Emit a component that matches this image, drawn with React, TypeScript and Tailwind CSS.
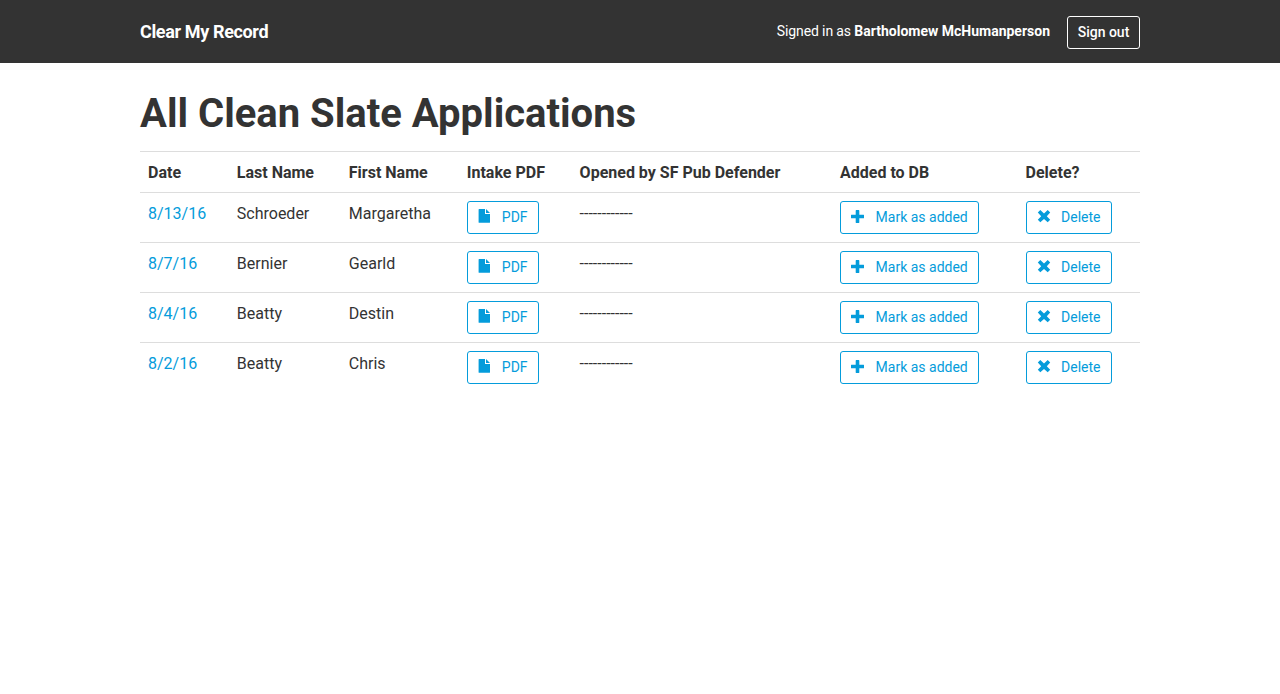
const rows = [
  ["8/13/16", "Schroeder", "Margaretha"],
  ["8/7/16", "Bernier", "Gearld"],
  ["8/4/16", "Beatty", "Destin"],
  ["8/2/16", "Beatty", "Chris"],
];

const button =
  "inline-flex h-[33px] items-center rounded-[3px] border border-[#049cdb] bg-white pb-[2px] text-sm text-[#049cdb] whitespace-nowrap pl-[10px]";

function FileIcon() {
  return (
    <svg width="14" height="14" viewBox="0 0 14 14" fill="currentColor" className="mb-[2px]">
      <path d="M1.2 0H7v5h5v8.2a.6.6 0 0 1-.6.6H1.2a.6.6 0 0 1-.6-.6V.6a.6.6 0 0 1 .6-.6zM8 0l4 4H8z" />
    </svg>
  );
}

function PlusIcon() {
  return (
    <svg width="14" height="14" viewBox="0 0 14 14" fill="currentColor">
      <path d="M5.1 0h2.8a.4.4 0 0 1 .4.4v4.3h4.3a.4.4 0 0 1 .4.4v2.8a.4.4 0 0 1-.4.4H8.3v4.3a.4.4 0 0 1-.4.4H5.1a.4.4 0 0 1-.4-.4V8.3H.4a.4.4 0 0 1-.4-.4V5.1a.4.4 0 0 1 .4-.4h4.3V.4a.4.4 0 0 1 .4-.4z" />
    </svg>
  );
}

function CrossIcon() {
  return (
    <svg width="14" height="14" viewBox="0 0 14 14" fill="currentColor" className="mb-[2px]">
      <path d="M3.3 1 7 4.4 10.7 1l2.5 2.5-3.4 3.7 3.4 3.6-2.5 2.5L7 9.9l-3.7 3.4L.8 10.8l3.4-3.6L.8 3.5z" />
    </svg>
  );
}

export default function App() {
  return (
    <div className="min-h-screen bg-white font-['Roboto',sans-serif] text-[#333]">
      <header className="h-[63px] bg-[#333] text-white">
        <div className="mx-auto flex h-full w-[1000px] items-center justify-between">
          <div className="text-[18px] font-bold tracking-[-0.36px]">Clear My Record</div>
          <div className="flex items-center text-sm">
            <span className="pb-[2px]">
              <span className="tracking-[-0.12px]">Signed in as </span>
              <b>Bartholomew McHumanperson</b>
            </span>
            <button className="ml-[17px] mt-px h-[33px] w-[73px] rounded-[3px] border border-white font-medium">Sign out</button>
          </div>
        </div>
      </header>
      <main className="mx-auto w-[1000px] pt-[29px]">
        <h1 className="h-[59px] text-[40px] leading-[44px] font-bold">All Clean Slate Applications</h1>
        <table className="w-full table-fixed border-collapse text-left text-base">
          <colgroup>
            <col className="w-[88.8px]" />
            <col className="w-[112px]" />
            <col className="w-[118px]" />
            <col className="w-[112.8px]" />
            <col className="w-[260.4px]" />
            <col className="w-[185.6px]" />
            <col className="w-[122.4px]" />
          </colgroup>
          <thead>
            <tr className="h-[41px] border-y border-[#ddd]">
              {["Date", "Last Name", "First Name", "Intake PDF", "Opened by SF Pub Defender", "Added to DB", "Delete?"].map((label) => (
                <th key={label} className="px-2 pt-[2px] font-bold whitespace-nowrap">{label}</th>
              ))}
            </tr>
          </thead>
          <tbody>
            {rows.map(([date, last, first]) => (
              <tr key={date} className="h-[50px] border-t border-[#ddd] align-top leading-6">
                <td className="px-2 pt-[9px] text-[#049cdb]">{date}</td>
                <td className="px-2 pt-[9px]">{last}</td>
                <td className="px-2 pt-[9px]">{first}</td>
                <td className="px-2 pt-2">
                  <button className={`${button} w-[72px] gap-[10px]`}><FileIcon />PDF</button>
                </td>
                <td className="px-2 pt-[9px]">------------</td>
                <td className="px-2 pt-2">
                  <button className={`${button} w-[139px] gap-[10.6px]`}><PlusIcon />Mark as added</button>
                </td>
                <td className="px-2 pt-2">
                  <button className={`${button} w-[86px] gap-[10.5px]`}><CrossIcon />Delete</button>
                </td>
              </tr>
            ))}
          </tbody>
        </table>
      </main>
    </div>
  );
}
